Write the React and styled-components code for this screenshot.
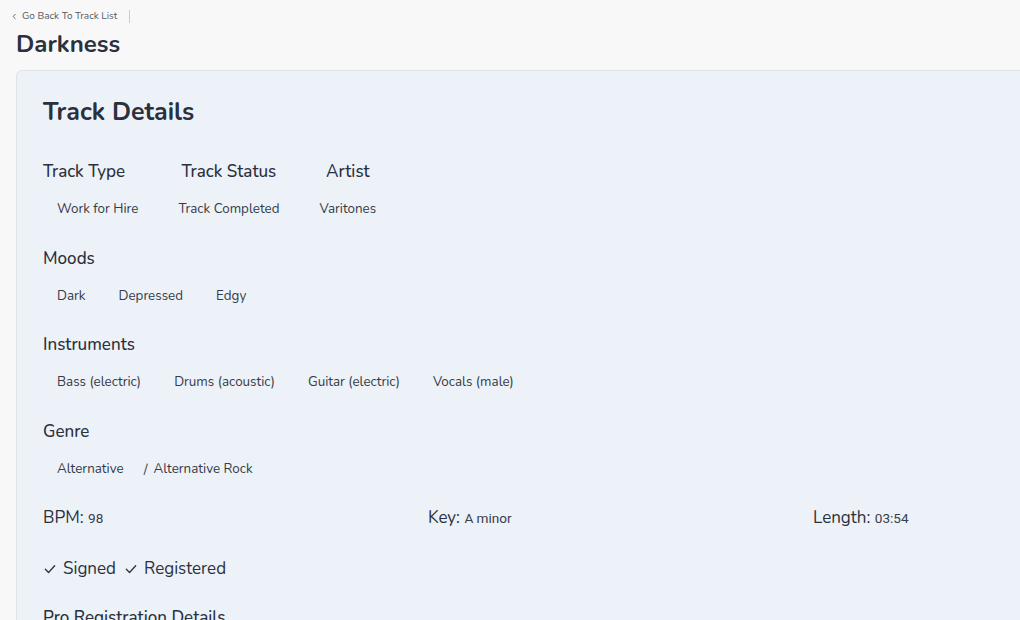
import React from 'react';
import styled, { createGlobalStyle } from 'styled-components';

const GlobalStyle = createGlobalStyle`
  html, body {
    margin: 0;
    padding: 0;
    background: #f8f8f8;
    overflow: hidden;
  }
  body {
    font-family: 'Nunito', 'Lato', 'Noto Sans', sans-serif;
    color: #2c323e;
  }
`;

const track = {
  title: 'Darkness',
  type: 'Work for Hire',
  status: 'Track Completed',
  artist: 'Varitones',
  moods: ['Dark', 'Depressed', 'Edgy'],
  instruments: ['Bass (electric)', 'Drums (acoustic)', 'Guitar (electric)', 'Vocals (male)'],
  genre: ['Alternative', 'Alternative Rock'],
  bpm: '98',
  key: 'A minor',
  length: '03:54',
};

const Check = () => (
  <svg width="14" height="14" viewBox="0 0 24 24" fill="none" stroke="currentColor" strokeWidth="2.2" strokeLinecap="round" strokeLinejoin="round">
    <polyline points="4 12.5 9.5 18 20 6.5" />
  </svg>
);

const App = () => (
  <>
    <GlobalStyle />
    <Page>
      <BackBar>
        <BackLink>
          <svg width="7" height="7" viewBox="0 0 10 10" fill="none" stroke="currentColor" strokeWidth="1.3">
            <polyline points="6.5 1.5 3 5 6.5 8.5" />
          </svg>
          Go Back To Track List
        </BackLink>
        <Divider />
      </BackBar>
      <PageTitle>{track.title}</PageTitle>
      <Card>
        <CardTitle>Track Details</CardTitle>

        <InfoRow>
          <InfoColumn>
            <Heading>Track Type</Heading>
            <Chips>
              <Chip>{track.type}</Chip>
            </Chips>
          </InfoColumn>
          <InfoColumn center>
            <Heading>Track Status</Heading>
            <Chips>
              <Chip>{track.status}</Chip>
            </Chips>
          </InfoColumn>
          <InfoColumn center>
            <Heading>Artist</Heading>
            <Chips>
              <Chip>{track.artist}</Chip>
            </Chips>
          </InfoColumn>
        </InfoRow>

        <Section>
          <Heading>Moods</Heading>
          <Chips>
            {track.moods.map((m) => (
              <Chip key={m}>{m}</Chip>
            ))}
          </Chips>
        </Section>

        <Section wide>
          <Heading>Instruments</Heading>
          <Chips>
            {track.instruments.map((i) => (
              <Chip key={i}>{i}</Chip>
            ))}
          </Chips>
        </Section>

        <Section>
          <Heading>Genre</Heading>
          <Chips>
            <Chip>{track.genre[0]}</Chip>
            <Slash>/</Slash>
            <Chip flush>{track.genre[1]}</Chip>
          </Chips>
        </Section>

        <Stats>
          <Stat>
            BPM: <StatValue>{track.bpm}</StatValue>
          </Stat>
          <Stat>
            Key: <StatValue>{track.key}</StatValue>
          </Stat>
          <Stat>
            Length: <StatValue>{track.length}</StatValue>
          </Stat>
        </Stats>

        <Flags>
          <Flag>
            <Check /> Signed
          </Flag>
          <Flag>
            <Check /> Registered
          </Flag>
        </Flags>

        <Heading>Pro Registration Details</Heading>
      </Card>
    </Page>
  </>
);

export default App;

const Page = styled.div`
  padding: 9px 0 0 16px;
  width: 1220px;
`;

const BackBar = styled.div`
  display: flex;
  align-items: center;
  height: 14px;
`;

const BackLink = styled.a`
  display: flex;
  align-items: center;
  gap: 4px;
  font-size: 10px;
  color: #555b66;
  cursor: pointer;
  margin-left: -5px;
`;

const Divider = styled.span`
  width: 1px;
  height: 13px;
  background: #c9ccd2;
  margin-left: 12px;
`;

const PageTitle = styled.h1`
  margin: 5px 0 0;
  font-size: 24px;
  font-weight: 700;
  line-height: 32px;
  color: #2a303c;
`;

const Card = styled.div`
  margin-top: 10px;
  background: #edf2f9;
  border: 1px solid #dfe3e8;
  border-radius: 6px;
  padding: 24px 26px 0;
  min-height: 600px;
`;

const CardTitle = styled.h2`
  margin: 0 0 32px;
  font-size: 25px;
  font-weight: 700;
  line-height: 34px;
  color: #2a303c;
`;

const InfoRow = styled.div`
  display: flex;
  gap: 12px;
  margin-bottom: 28px;
`;

const InfoColumn = styled.div`
  display: flex;
  flex-direction: column;
  align-items: ${(p) => (p.center ? 'center' : 'flex-start')};
`;

const Section = styled.div`
  margin-bottom: ${(p) => (p.wide ? '28px' : '27px')};
`;

const Heading = styled.h3`
  margin: 0;
  font-size: 17px;
  font-weight: 500;
  line-height: 22px;
  color: #2a303c;
`;

const Chips = styled.div`
  display: flex;
  align-items: center;
  gap: 5px;
  margin-top: 15px;
`;

const Chip = styled.span`
  padding: ${(p) => (p.flush ? '0 14px 0 0' : '0 14px')};
  font-size: 13.4px;
  line-height: 22px;
  color: #353b47;
`;

const Slash = styled.span`
  font-size: 13.4px;
  color: #353b47;
  margin: 0 1px 0 1px;
`;

const Stats = styled.div`
  display: grid;
  grid-template-columns: repeat(3, 385px);
`;

const Stat = styled.div`
  font-size: 17px;
  line-height: 22px;
  color: #2a303c;
`;

const StatValue = styled.span`
  font-family: 'Roboto', 'Liberation Sans', sans-serif;
  font-size: 13.6px;
  color: #3a404b;
`;

const Flags = styled.div`
  display: flex;
  gap: 8px;
  margin: 29px 0 27px;
`;

const Flag = styled.div`
  display: flex;
  align-items: center;
  gap: 6px;
  font-size: 17px;
  line-height: 22px;
  color: #2a303c;
`;
